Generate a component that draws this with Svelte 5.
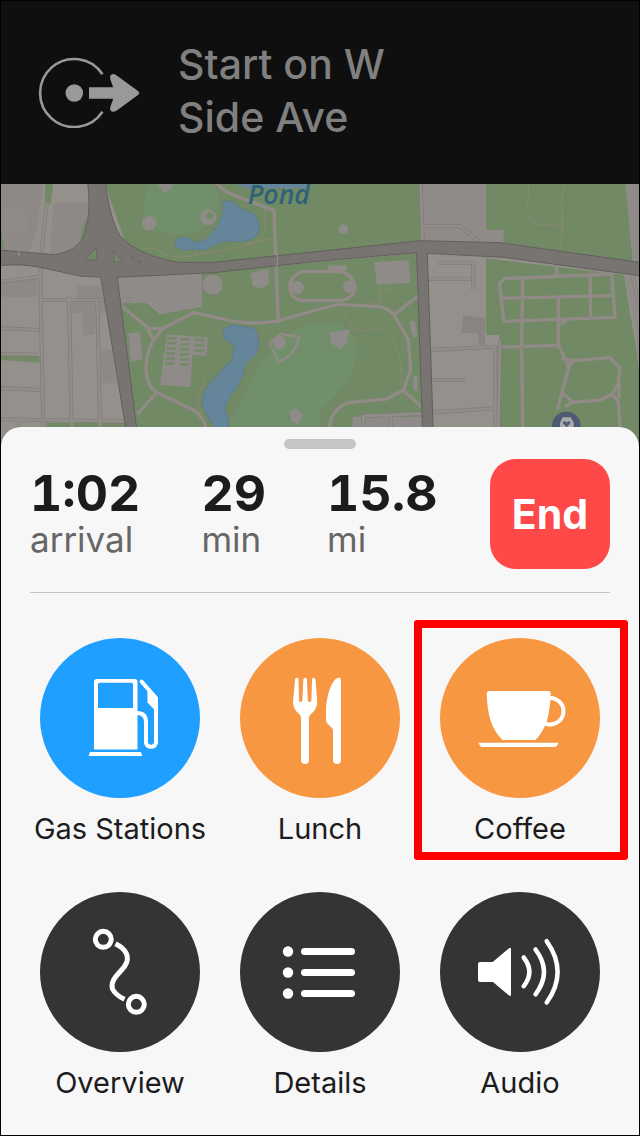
<script lang="ts">
  interface Stat {
    value: string;
    unit: string;
  }

  interface Action {
    id: string;
    label: string;
    tone: 'blue' | 'orange' | 'dark';
  }

  const stats: Stat[] = [
    { value: '1:02', unit: 'arrival' },
    { value: '29', unit: 'min' },
    { value: '15.8', unit: 'mi' },
  ];

  const actions: Action[] = [
    { id: 'gas', label: 'Gas Stations', tone: 'blue' },
    { id: 'lunch', label: 'Lunch', tone: 'orange' },
    { id: 'coffee', label: 'Coffee', tone: 'orange' },
    { id: 'overview', label: 'Overview', tone: 'dark' },
    { id: 'details', label: 'Details', tone: 'dark' },
    { id: 'audio', label: 'Audio', tone: 'dark' },
  ];

  let selected = $state('coffee');
</script>

<main class="screen">
  <header class="banner">
    <svg class="banner__icon" viewBox="38 53 104 74" aria-hidden="true">
      <path d="M102.5 73.3 A34 34 0 1 0 102.5 110.7" fill="none" stroke="currentColor" stroke-width="2.6" />
      <circle cx="74.3" cy="92" r="8.8" fill="currentColor" />
      <path
        d="M89 86.2H113.2L110.2 78Q109.5 73.5 113 73Q114.500 73 116 74L138 90Q140.500 92 138 94L116 110Q114 111.300 112 110.500Q109.500 109.500 110.300 106L113.200 97.800H89Z"
        fill="currentColor"
      />
    </svg>
    <h1 class="banner__text">Start on W Side Ave</h1>
  </header>

  <svg class="map" viewBox="3 12 1914 789" preserveAspectRatio="xMidYMin slice" role="img" aria-label="Map">
    <rect width="1920" height="820" fill="#94918c" />

    <!-- built-up blocks -->
    <g fill="#8c8986">
      <path d="M0 12H130L110 150L80 240L0 210Z" />
      <path d="M160 70H265L250 180L200 222H150Z" />
      <path d="M0 310L110 285V350H0Z" />
      <path d="M230 318H300L320 400H285V465H250V400H215V360H230Z" />
      <path d="M305 510H335L350 610H305Z" />
    </g>
    <path d="M5 85Q60 70 85 95L80 155L10 160Z" fill="#8f8c87" />

    <!-- parkland -->
    <g fill="#718964">
      <path d="M315 12H1262V200L960 220L640 250H530L380 200Z" />
      <path d="M136 12H160L152 72L134 68Z" />
      <path d="M3 150L12 205H3Z" />
      <path d="M3 518L118 528V548L3 540Z" />
      <path d="M262 110L258 150L242 185Q240 150 262 110Z" />
      <path d="M605 282L960 245L1252 220L1272 745V801H408L360 375L372 368H440L480 402L605 380Z" />
      <path d="M1458 12H1876L1900 250L1700 215L1510 188V150H1458Z" />
      <path d="M1458 235L1872 285L1917 560V801H1498V465H1458Z" />
      <path d="M140 728H400V745H140Z" />
    </g>
    <g fill="#728f6b">
      <path d="M450 12H640Q690 90 600 150Q500 190 440 120Q420 60 450 12Z" />
      <path d="M690 720L790 540Q850 440 960 425Q1080 430 1070 530Q1050 620 960 690V801H690Z" />
    </g>

    <!-- plots, lots and buildings -->
    <g fill="#8f8b88">
      <path d="M355 292L605 282V378L485 403L445 366H355Z" />
      <path d="M1262 12H1458V150H1510V188L1262 182Z" />
      <path d="M1878 12H1917V250H1898Z" />
      <circle cx="447" cy="130" r="22" />
      <circle cx="638" cy="314" r="30" />
      <path d="M750 280L805 265L808 310Q785 335 758 316Z" />
      <path d="M472 12H520Q510 38 492 38Z" />
      <path d="M385 460L420 457L427 540L392 544Z" />
      <path d="M500 463L624 472L618 528L578 524L570 622L480 614Z" />
      <path d="M1123 246L1226 241L1231 308L1130 314Z" />
      <circle cx="1030" cy="148" r="15" />
      <path d="M990 458L1050 448L1040 492L1020 506L992 490Z" />
      <circle cx="838" cy="487" r="20" />
      <path d="M870 695L888 685L910 705L895 732L875 725Z" />
      <path d="M1228 425L1245 420L1252 470L1238 474Z" />
      <path d="M1240 588H1252V632H1240Z" />
      <path d="M1875 285L1898 288L1917 380V560L1905 440Z" />
      <path d="M1058 710H1285V801H1058Z" />
    </g>
    <g fill="none" stroke="#718964" stroke-width="7">
      <path
        d="M502 475h28M500 490h28M499 505h28M498 520h28M497 535h28M496 550h28M542 478h28M541 493h28M541 508h28M540 523h28M540 538h28M539 553h28M584 480h30M584 496h30M583 512h30"
      />
    </g>
    <path d="M1390 405L1455 415V495H1438L1432 460H1385Z" fill="#878482" />

    <!-- water -->
    <g fill="#64859a" stroke="#5a7a90" stroke-width="2">
      <path
        d="M670 65Q700 55 715 82L760 100Q785 125 775 160Q755 185 715 185Q665 178 635 200Q610 215 575 208Q540 215 525 195Q520 175 545 172Q575 172 580 186Q610 190 625 172Q655 140 668 105Z"
      />
      <path
        d="M670 450Q685 430 725 438L765 446Q785 480 770 520L735 555Q728 600 705 630Q680 655 675 690Q695 735 680 760H650Q635 720 612 690Q595 655 630 610Q665 570 695 540L705 500L672 475Z"
      />
      <path d="M705 12H930L915 25H740Z" stroke="none" />
    </g>

    <!-- footpaths -->
    <g fill="none" stroke="#86886f" stroke-width="4">
      <path d="M425 205Q460 200 490 220T600 222L700 205Q790 190 795 150V90M740 190L820 175M587 210V225" />
      <path d="M615 570Q620 610 600 630Q585 660 605 700" />
      <path d="M1586 12L1583 95Q1590 130 1610 132L1683 137M1696 12Q1683 40 1687 100V150L1678 215" />
      <path d="M1035 385Q1040 445 1085 455Q1130 450 1143 385M1120 445Q1210 450 1202 615M1140 315V370M1105 362L1140 372M1140 330H1165L1182 317" />
    </g>

    <!-- park drives -->
    <g fill="none" stroke="#918a87" stroke-width="10" stroke-linejoin="round">
      <path d="M650 12Q680 40 720 52L822 92L835 430" />
      <path d="M360 375L440 440L460 480Q430 540 440 590Q450 630 475 640L580 690Q610 710 620 745" />
      <path d="M460 480L490 445L580 398L690 422Q760 436 835 422L960 387L1015 373L1140 380Q1175 390 1185 410L1225 480L1232 570L1210 630L1160 657L1045 668Q985 690 988 760" />
      <path d="M440 446L490 445M470 638L412 702M1182 404L1256 347M1208 630L1268 683" />
      <path d="M905 275Q868 290 870 325Q872 352 900 362H1020Q1062 355 1065 325Q1062 285 1025 275Z" />
      <path d="M897 470Q885 530 835 545L808 490L840 462Z" stroke-width="7" />
      <path d="M1498 310L1515 296L1835 282L1845 412L1512 424Z" />
      <path d="M1498 355L1845 347M1568 295L1565 495L1568 760M1770 285L1772 418M1675 348V495L1707 560L1672 690M1290 508L1675 496M1670 285V255M1675 435L1700 422" />
      <path d="M1690 535L1720 542L1830 533L1860 565L1855 610L1838 642L1800 660L1720 667L1685 638M1685 535L1720 545L1700 565M1695 680L1720 665M1838 642L1855 665L1862 760M1857 610V655" />
    </g>
    <g fill="#8f8b88">
      <circle cx="892" cy="323" r="20" />
      <circle cx="1048" cy="320" r="19" />
      <circle cx="625" cy="112" r="24" />
      <path d="M985 256H1040V270H985Z" />
    </g>
    <circle cx="630" cy="108" r="10" fill="#718964" />

    <!-- streets: casing, then fill -->
    {#each [{ stroke: '#7f7b79', width: 12 }, { stroke: '#918e8a', width: 8 }] as pass (pass.width)}
      <g fill="none" stroke={pass.stroke} stroke-width={pass.width}>
        <path d="M140 70L125 215M122 262V360L130 745M207 350L215 740M292 360L300 740M122 360H320M3 445L118 450M3 522L120 524M3 625L128 630M3 718L410 725M3 305L118 290" />
        <path d="M1270 138H1380L1440 188M1315 248H1420V330M1282 296H1412M1290 510L1490 500M1486 500V745M1295 600H1395M1285 698L1485 685M1090 750V708L1285 700M1172 750V705M1262 12L1268 182M1898 288L1917 370M1500 485L1495 745" />
        <path d="M58 725V760M350 365L395 358" />
      </g>
    {/each}

    <!-- main roads -->
    <g stroke="#625f5c" stroke-width="3" fill="#777472" stroke-linejoin="round">
      <path
        d="M-5 210L165 224Q235 215 255 160Q275 90 262 0H315Q325 90 350 150Q380 215 530 247H640L960 214L1260 182L1500 188L1925 248V288L1510 232L1282 220L1300 760H1268L1250 218L960 243L640 278L352 292L412 760H380L302 291L245 289L120 262Q60 250 -5 257Z"
      />
    </g>
    <g fill="#718964" stroke="#625f5c" stroke-width="2">
      <path d="M290 202V240H254Z" />
      <path d="M341 212L368 246H342Z" />
      <path d="M392 230L424 246H408Z" />
    </g>
    <path d="M56 205V228M832 222V258" stroke="#918a87" stroke-width="4" />

    <!-- place pin -->
    <circle cx="1699" cy="738" r="43" fill="#4e5974" />
    <path d="M1680 745V728L1688 712H1712L1721 728V745Z" fill="#aaa9ac" />
    <path d="M1688 728Q1693 720 1700 728Q1708 720 1712 728L1700 742Z" fill="#4e5974" />

    <text class="map__label" x="743" y="71">Pond</text>
  </svg>

  <section class="sheet">
    <div class="sheet__handle"></div>

    <div class="trip">
      <dl class="trip__stats">
        {#each stats as stat (stat.unit)}
          <div class="stat">
            <dd class="stat__value">{stat.value}</dd>
            <dt class="stat__unit">{stat.unit}</dt>
          </div>
        {/each}
      </dl>
      <button class="trip__end" type="button">End</button>
    </div>

    <div class="actions">
      {#each actions as action (action.id)}
        <button
          class="action"
          class:action--selected={selected === action.id}
          type="button"
          onclick={() => (selected = action.id)}
        >
          <svg class="action__icon action__icon--{action.tone}" viewBox="0 0 160 160" aria-hidden="true">
            {#if action.id === 'gas'}
              <path
                d="M57 41H94.500Q97.500 41 97.500 44V111.500H54V44Q54 41 57 41ZM59.500 44.700Q58 44.700 58 46.200V70H93V46.200Q93 44.700 91.500 44.700Z"
                fill="#fff"
                fill-rule="evenodd"
              />
              <path d="M50 114H101L102.300 118H48.500Z" fill="#fff" />
              <path
                d="M97 75Q106 75 106 84V105A5.200 5.200 0 0 0 116 105V60L101.500 43.500"
                fill="none"
                stroke="#fff"
                stroke-width="4"
                stroke-linecap="round"
                stroke-linejoin="round"
              />
              <path d="M107.300 50L117.500 60V75L107.500 64.500Z" fill="#fff" />
            {:else if action.id === 'lunch'}
              <path
                d="M55 41.500Q55.300 39.700 57 39.700T58.500 41.500L59 62Q59 64 60.700 64T62.400 62L63.300 41.500Q63.500 39.700 65.200 39.700T67 41.500L67.800 62Q68 64 69.700 64T71.400 62L72 41.500Q72.200 39.700 73.600 39.700T75.500 41.500L77.200 64Q77.200 71 71.500 75.500Q69 77.500 69 80V122A4 4 0 0 1 61 122V80Q61 77.500 58.500 75.500Q53 71 53 64Z"
                fill="#fff"
              />
              <path
                d="M101 42V122A4 4 0 0 1 93 122V93Q93 90.500 90 88Q86 85 86 82V74C86 60 90 47 95.500 41Q101 38 101 42Z"
                fill="#fff"
              />
            {:else if action.id === 'coffee'}
              <path
                d="M49 53H108.500Q111 53 110.700 56C110 78 106 91 95.500 102H62.500C51.500 91 47.500 78 46.700 56Q46.500 53 49 53Z"
                fill="#fff"
              />
              <path d="M109 60A13.300 13.300 0 1 1 105 85.500" fill="none" stroke="#fff" stroke-width="4" />
              <path d="M38.300 104.700H118.700L116.500 108.300Q116 109 115 109H42Q41 109 40.500 108.300Z" fill="#fff" />
            {:else if action.id === 'overview'}
              <g fill="none" stroke="#fff" stroke-width="5">
                <circle cx="63.300" cy="47.300" r="8" />
                <circle cx="96.300" cy="112.300" r="8" />
                <path d="M75.500 51.800C86 57 91 65 84.500 74.500C78 83 70 88 72.500 97Q75.500 103 84.500 107.300" />
              </g>
            {:else if action.id === 'details'}
              <g fill="#fff">
                {#each [59, 80, 101] as y (y)}
                  <circle cx="48" cy={y + 0.5} r="5.200" />
                  <rect x="61" y={y - 3} width="54" height="7" rx="3.500" />
                {/each}
              </g>
            {:else}
              <path
                d="M40 70H52.700L69 56.200Q71 55 71 57V102.500Q71 104.800 69 103.500L53 90H40Q38 90 38 88V72Q38 70 40 70Z"
                fill="#fff"
              />
              <path
                d="M83.700 65.500Q95 79.800 83.700 94.200M95.500 57.500Q112.500 79.800 95.500 102.300M106.700 49.200Q128.500 79.800 106.700 110.500"
                fill="none"
                stroke="#fff"
                stroke-width="4.500"
                stroke-linecap="round"
              />
            {/if}
          </svg>
          <span class="action__label">{action.label}</span>
        </button>
      {/each}
    </div>
  </section>
</main>

<style>
  :global(body) {
    margin: 0;
    background: #000;
  }

  .screen {
    box-sizing: border-box;
    display: flex;
    flex-direction: column;
    min-height: 100vh;
    border: 1px solid #000;
    background: #0f0f0f;
    font-family: Inter, 'Liberation Sans', sans-serif;
    color: #1c1c1e;
  }

  button {
    padding: 0;
    border: 0;
    background: none;
    color: inherit;
    font: inherit;
    cursor: pointer;
  }

  .banner {
    display: flex;
    align-items: center;
    gap: 36px;
    padding: 37px 37px 40px;
    color: #999;
  }

  .banner__icon {
    flex: none;
    width: 104px;
    height: 74px;
  }

  .banner__text {
    max-width: 260px;
    margin: 0;
    color: #808080;
    font-size: 41px;
    font-weight: 500;
    line-height: 53px;
  }

  .map {
    display: block;
    width: 100%;
  }

  .map__label {
    fill: #2f6278;
    font: italic 600 80px 'Open Sans', 'Noto Sans', sans-serif;
  }

  .sheet {
    position: relative;
    flex: 1;
    margin-top: -20px;
    padding: 12px 19px 32px;
    border-radius: 20px 20px 0 0;
    background: #f7f7f7;
  }

  .sheet__handle {
    width: 72px;
    height: 10px;
    margin: 0 auto 10px;
    border-radius: 5px;
    background: #c6c6c6;
  }

  .trip {
    display: flex;
    align-items: flex-start;
    justify-content: space-between;
    margin: 0 10px;
    padding-bottom: 23px;
    border-bottom: 1px solid #c4c4c4;
  }

  .trip__stats {
    display: flex;
    gap: 61px;
    margin: 0;
    padding-top: 7px;
  }

  .stat__value {
    margin: 0;
    font-size: 50px;
    font-weight: 700;
    font-variant-numeric: tabular-nums;
    line-height: 54px;
  }

  .stat__unit {
    color: #666;
    font-size: 35px;
    line-height: 38px;
  }

  .trip__end {
    width: 120px;
    height: 110px;
    border-radius: 26px;
    background: #ff4848;
    color: #fff;
    font-size: 41px;
    font-weight: 700;
  }

  .actions {
    display: grid;
    grid-template-columns: repeat(3, 1fr);
    row-gap: 45px;
    padding-top: 45px;
  }

  .action {
    position: relative;
    display: flex;
    flex-direction: column;
    align-items: center;
    gap: 13px;
  }

  /* marker frame drawn around the chosen tile */
  .action--selected::after {
    content: '';
    position: absolute;
    inset: -18px -8px -13px -6px;
    border: 8px solid #f00;
    border-radius: 3px;
  }

  .action__icon {
    width: 160px;
    height: 160px;
    border-radius: 50%;
  }

  .action__icon--blue {
    background: #1f9fff;
  }

  .action__icon--orange {
    background: #f89742;
  }

  .action__icon--dark {
    background: #343434;
  }

  .action__label {
    font-size: 29px;
    line-height: 36px;
    white-space: nowrap;
  }
</style>
